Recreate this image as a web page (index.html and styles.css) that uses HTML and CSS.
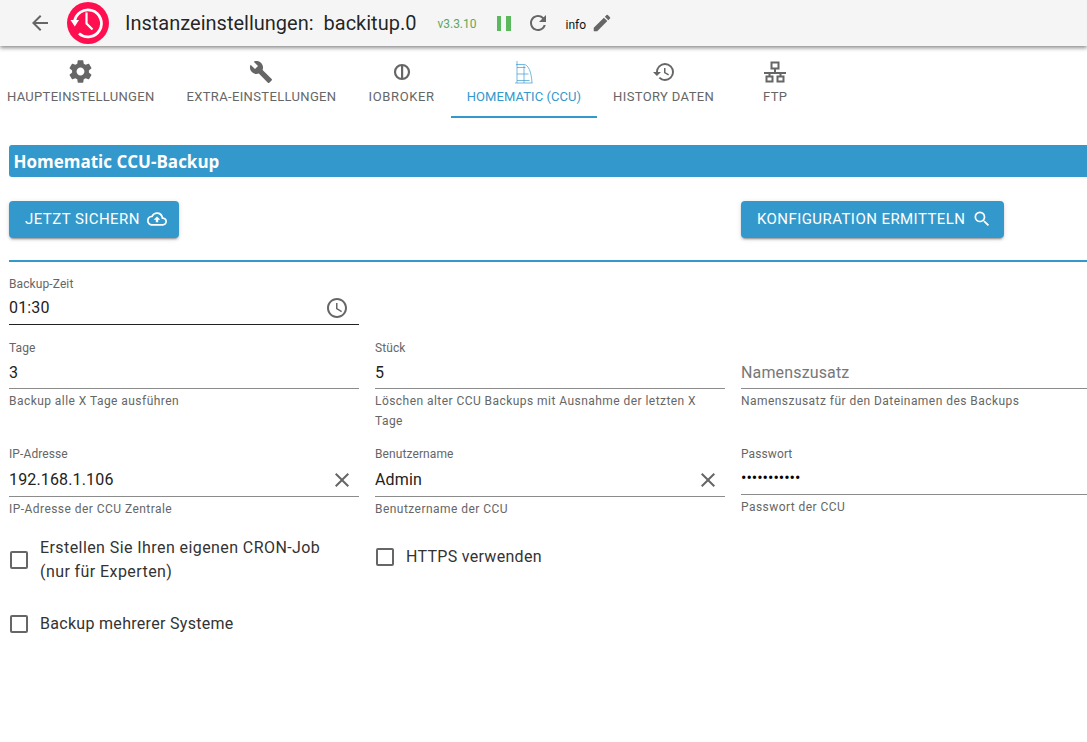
FILE: index.html
```html
<!DOCTYPE html>
<html lang="de">
<head>
<meta charset="utf-8">
<title>Instanzeinstellungen</title>
<link rel="stylesheet" href="styles.css">
</head>
<body>
<header class="topbar">
  <svg class="back" viewBox="0 0 24 24"><path d="M20 11H7.830l5.590-5.590L12 4l-8 8 8 8 1.410-1.410L7.830 13H20z"/></svg>
  <svg class="logo" viewBox="0 0 42 42">
    <circle cx="21" cy="21" r="21" fill="#ff0f50"/>
    <path d="M7.500 20A13.500 13.500 0 1 1 12 31.500" fill="none" stroke="#fff" stroke-width="2.800"/>
    <path d="M3.500 18h8.500l-4.200 6.500z" fill="#fff"/>
    <path d="M19.500 10.500V21.500L25.500 27.500" fill="none" stroke="#fff" stroke-width="2.200"/>
  </svg>
  <h1 class="title">Instanzeinstellungen: <span class="title-name">backitup.0</span></h1>
  <span class="version">v3.3.10</span>
  <span class="pause"><i></i><i></i></span>
  <svg class="refresh" viewBox="0 0 24 24"><path d="M17.650 6.350A7.958 7.958 0 0 0 12 4c-4.420 0-7.990 3.580-7.990 8s3.570 8 7.990 8c3.730 0 6.840-2.550 7.730-6h-2.080A5.990 5.990 0 0 1 12 18c-3.310 0-6-2.690-6-6s2.690-6 6-6c1.660 0 3.140.690 4.220 1.780L13 11h7V4z"/></svg>
  <span class="loglevel">info</span>
  <svg class="pencil" viewBox="0 0 24 24"><path d="M3 17.250V21h3.750L17.810 9.940l-3.750-3.750zM20.710 7.040a1 1 0 0 0 0-1.410l-2.340-2.340a1 1 0 0 0-1.410 0l-1.830 1.830 3.750 3.750z"/></svg>
</header>

<nav class="tabs">
  <div class="tab">
    <svg class="icon-gear" viewBox="0 0 24 24"><path d="M19.430 12.980c.040-.320.070-.640.070-.980s-.030-.660-.070-.980l2.110-1.650c.190-.150.240-.420.120-.640l-2-3.460c-.120-.220-.390-.300-.610-.220l-2.490 1c-.520-.400-1.080-.730-1.690-.980l-.380-2.650A.488.488 0 0 0 14 2h-4c-.250 0-.460.180-.490.420l-.380 2.650c-.610.250-1.170.590-1.690.980l-2.490-1c-.230-.090-.490 0-.610.220l-2 3.460c-.130.220-.070.490.120.640l2.110 1.650c-.040.320-.070.650-.070.980s.030.660.070.980l-2.110 1.650c-.190.150-.240.420-.120.640l2 3.460c.120.220.390.300.610.220l2.490-1c.520.400 1.080.730 1.690.980l.380 2.650c.030.240.240.420.490.420h4c.250 0 .460-.180.490-.420l.380-2.650c.610-.250 1.170-.590 1.690-.980l2.490 1c.230.090.490 0 .610-.220l2-3.460c.120-.220.070-.490-.120-.640l-2.110-1.650zM12 15.500c-1.930 0-3.500-1.570-3.500-3.500s1.570-3.500 3.500-3.500 3.500 1.570 3.500 3.500-1.570 3.500-3.500 3.500z"/></svg>
    <span>Haupteinstellungen</span>
  </div>
  <div class="tab tab-extra">
    <svg viewBox="0 0 24 24"><path d="M22.700 19l-9.100-9.100c.900-2.300.400-5-1.500-6.900-2-2-5-2.400-7.400-1.300L9 6 6 9 1.600 4.700C.400 7.100.900 10.100 2.900 12.100c1.900 1.900 4.600 2.400 6.900 1.500l9.100 9.100c.400.400 1 .400 1.400 0l2.300-2.300c.500-.400.500-1.100.100-1.400z"/></svg>
    <span>Extra-Einstellungen</span>
  </div>
  <div class="tab tab-iobroker">
    <svg viewBox="0 0 24 24"><circle cx="12" cy="12" r="7" fill="none" stroke="currentColor" stroke-width="2.200"/><rect x="11" y="5" width="2.200" height="13.500"/></svg>
    <span>ioBroker</span>
  </div>
  <div class="tab tab-active">
    <svg viewBox="0 0 24 24"><path class="hm-lines" d="M5 1v22M12 5.500v17.500M4 4.500h8c4 0 7.500 7 8 18.500M5 7.500h8.500M5 14h11.500M5 20.500h12.500M3 23h17.500"/></svg>
    <span>Homematic (CCU)</span>
  </div>
  <div class="tab tab-history">
    <svg viewBox="0 0 24 24"><path d="M13 3a9 9 0 0 0-9 9H1l3.890 3.890.070.140L9 12H6c0-3.870 3.130-7 7-7s7 3.130 7 7-3.130 7-7 7c-1.930 0-3.680-.790-4.940-2.060l-1.420 1.420A8.954 8.954 0 0 0 13 21a9 9 0 0 0 0-18zm-1 5v5l4.280 2.540.720-1.210-3.500-2.080V8z"/></svg>
    <span>History Daten</span>
  </div>
  <div class="tab">
    <svg viewBox="0 0 24 24"><path class="ftp-lines" d="M8.500 2.500h7v6h-7zM3.500 16.500h6v5h-6zM14.500 16.500h6v5h-6zM12 8.500v4.500M1 13h22M6.500 13v3.500M17.500 13v3.500"/></svg>
    <span>FTP</span>
  </div>
</nav>

<main class="content">
  <h2 class="section">Homematic CCU-Backup</h2>

  <div class="actions">
    <button class="btn" type="button">Jetzt sichern
      <svg viewBox="0 0 24 24"><path d="M19.350 10.040A7.490 7.490 0 0 0 12 4C9.110 4 6.600 5.640 5.350 8.040A5.994 5.994 0 0 0 0 14c0 3.310 2.690 6 6 6h13c2.760 0 5-2.240 5-5 0-2.640-2.050-4.780-4.650-4.960zM19 18H6c-2.210 0-4-1.790-4-4 0-2.050 1.530-3.760 3.560-3.970l1.070-.110.500-.950A5.469 5.469 0 0 1 12 6c2.620 0 4.880 1.860 5.390 4.430l.300 1.500 1.530.110A2.980 2.980 0 0 1 22 15c0 1.650-1.350 3-3 3zM8 13h2.550v3h2.900v-3H16l-4-4z"/></svg>
    </button>
    <button class="btn btn-config" type="button">Konfiguration ermitteln
      <svg viewBox="0 0 24 24"><path d="M15.500 14h-.790l-.280-.270A6.471 6.471 0 0 0 16 9.500 6.500 6.500 0 1 0 9.500 16c1.610 0 3.090-.590 4.230-1.570l.270.280v.790l5 4.990L20.490 19zm-6 0C7.010 14 5 11.990 5 9.500S7.010 5 9.500 5 14 7.010 14 9.500 11.990 14 9.500 14z"/></svg>
    </button>
  </div>

  <hr class="rule">

  <div class="form">
    <div class="field field-time">
      <label>Backup-Zeit</label>
      <div class="value value-strong"><span>01:30</span>
        <svg class="field-icon icon-clock" viewBox="0 0 24 24"><path d="M11.990 2C6.470 2 2 6.480 2 12s4.470 10 9.990 10C17.520 22 22 17.520 22 12S17.520 2 11.990 2zM12 20c-4.420 0-8-3.580-8-8s3.580-8 8-8 8 3.580 8 8-3.580 8-8 8zm.500-13H11v6l5.250 3.150.750-1.230-4.500-2.670z"/></svg>
      </div>
    </div>
    <div class="spacer"></div>
    <div class="spacer"></div>

    <div class="field field-mid">
      <label>Tage</label>
      <div class="value"><span>3</span></div>
      <p class="help">Backup alle X Tage ausführen</p>
    </div>
    <div class="field field-mid">
      <label>Stück</label>
      <div class="value"><span>5</span></div>
      <p class="help">Löschen alter CCU Backups mit Ausnahme der letzten X<br>Tage</p>
    </div>
    <div class="field field-mid">
      <label>&nbsp;</label>
      <div class="value"><span class="placeholder">Namenszusatz</span></div>
      <p class="help">Namenszusatz für den Dateinamen des Backups</p>
    </div>

    <div class="field field-cred">
      <label>IP-Adresse</label>
      <div class="value value-clear"><span>192.168.1.106</span>
        <svg class="field-icon" viewBox="0 0 24 24"><path d="M19 6.410 17.590 5 12 10.590 6.410 5 5 6.410 10.590 12 5 17.590 6.410 19 12 13.410 17.590 19 19 17.590 13.410 12z"/></svg>
      </div>
      <p class="help">IP-Adresse der CCU Zentrale</p>
    </div>
    <div class="field field-cred">
      <label>Benutzername</label>
      <div class="value value-clear"><span>Admin</span>
        <svg class="field-icon" viewBox="0 0 24 24"><path d="M19 6.410 17.590 5 12 10.590 6.410 5 5 6.410 10.590 12 5 17.590 6.410 19 12 13.410 17.590 19 19 17.590 13.410 12z"/></svg>
      </div>
      <p class="help">Benutzername der CCU</p>
    </div>
    <div class="field field-cred">
      <label>Passwort</label>
      <div class="value value-pass"><span>•••••••••••</span></div>
      <p class="help">Passwort der CCU</p>
    </div>

    <label class="check check-cron"><i class="box"></i><span>Erstellen Sie Ihren eigenen CRON-Job<br>(nur für Experten)</span></label>
    <label class="check check-https"><i class="box"></i><span>HTTPS verwenden</span></label>
    <div class="spacer"></div>

    <label class="check check-multi"><i class="box"></i><span>Backup mehrerer Systeme</span></label>
  </div>
</main>
</body>
</html>
```
FILE: styles.css
```css
* { box-sizing: border-box; }
html, body { margin: 0; padding: 0; height: 100%; overflow: hidden; background: #fff; }
body { font-family: Roboto, "Liberation Sans", sans-serif; color: rgba(0,0,0,.87); width: 1087px; }

.topbar {
  height: 46px; background: #f5f5f5; display: flex; align-items: center;
  box-shadow: 0 2px 4px rgba(0,0,0,.45); position: relative;
}
.back { width: 24px; height: 24px; fill: #666; margin-left: 28px; }
.logo { width: 42px; height: 42px; margin-left: 15px; }
.title { font-size: 20px; font-weight: 400; margin: 0 0 0 16px; white-space: nowrap; }
.title-name { margin-left: 5px; }
.version { font-size: 12px; color: #5ca85c; margin: 2px 0 0 21px; }
.pause { display: flex; gap: 5px; margin-left: 20px; }
.pause i { display: block; width: 4.500px; height: 15px; background: #5cb85c; }
.refresh { width: 24px; height: 24px; fill: #666; margin-left: 15px; }
.loglevel { font-size: 12px; color: #111; margin: 3px 0 0 16px; }
.pencil { width: 22px; height: 22px; fill: #666; margin-left: 5px; }

.tabs { display: flex; height: 73px; margin: 0 0 0 -9px; }
.tab {
  display: flex; flex-direction: column; align-items: center; padding: 14px 16px 0;
  color: #666; font-size: 13px; letter-spacing: .3px; text-transform: uppercase;
  min-width: 90px; white-space: nowrap; font-weight: 400;
}
.tab svg { width: 24px; height: 24px; fill: currentColor; margin-bottom: 3px; flex: none; }
.tab svg.icon-gear { width: 27px; height: 27px; margin: -2px 0 2px; }
.tab-extra { letter-spacing: .35px; }
.tab-iobroker { letter-spacing: .65px; }
.tab-history { letter-spacing: .37px; }
.tab-active { color: #3399cc; border-bottom: 2px solid #3399cc; height: 72px; letter-spacing: .06px; }
.hm-lines { fill: none; stroke: #3399cc; stroke-width: .8; opacity: .85; }
.ftp-lines { fill: none; stroke: currentColor; stroke-width: 2; }
.tab span { line-height: 20px; }

.content { padding: 26px 0 0 9px; }
.section {
  margin: 0; height: 32px; line-height: 33px; background: #3399cc; color: #fff;
  font-family: "Open Sans", sans-serif; font-size: 17px; font-weight: 700;
  padding-left: 4.500px; border-radius: 3px 0 0 3px;
}
.actions { display: flex; margin-top: 24px; }
.btn {
  height: 37px; border: 0; border-radius: 4px; background: #3399cc; color: #fff;
  font-family: inherit; font-size: 15px; font-weight: 400; letter-spacing: .44px; text-transform: uppercase;
  padding: 0 12px 1px 16px; display: flex; align-items: center; gap: 7px;
  box-shadow: 0 3px 1px -2px rgba(0,0,0,.2), 0 2px 2px rgba(0,0,0,.14), 0 1px 5px rgba(0,0,0,.12);
}
.btn svg { width: 20px; height: 20px; fill: #fff; }
.btn-config { margin-left: 562px; }
.rule { border: 0; height: 2px; background: #3399cc; margin: 22px 0 0; }

.form { display: grid; grid-template-columns: 350px 350px 350px; column-gap: 16px; margin-top: 14px; }
.field label { display: block; font-size: 12px; color: #666; line-height: 16px; letter-spacing: .1px; }
.value {
  display: flex; align-items: center; justify-content: space-between; height: 33px;
  border-bottom: 1px solid #8c8c8c; font-size: 16px; color: #222; padding-top: 1px; letter-spacing: .15px;
}
.value-strong { border-bottom-color: #222; padding: 0 0 1px; }
.value-clear { height: 35px; }
.value-pass { color: #000; letter-spacing: 0; padding: 0 0 1px; }
.placeholder { color: #777; }
.field-icon { width: 24px; height: 24px; fill: #666; margin-right: 5px; flex: none; }
.icon-clock { margin-right: 10px; }
.help { margin: 2px 0 0; font-size: 12px; line-height: 20px; color: #666; letter-spacing: .45px; }
.field-time { height: 64px; }
.field-mid { height: 106px; }
.field-cred { height: 89px; }

.check { display: flex; align-items: center; font-size: 16px; line-height: 24px; color: #333; letter-spacing: .3px; }
.box {
  display: block; width: 18px; height: 18px; border: 2px solid #666; border-radius: 2px;
  margin: 0 12px 0 1px; flex: none;
}
.check-cron { height: 48px; letter-spacing: .42px; padding-top: 1px; }
.check-https { height: 44px; }
.check-multi { height: 24px; margin-top: 28px; grid-column: 1; padding-top: 1px; }
```
